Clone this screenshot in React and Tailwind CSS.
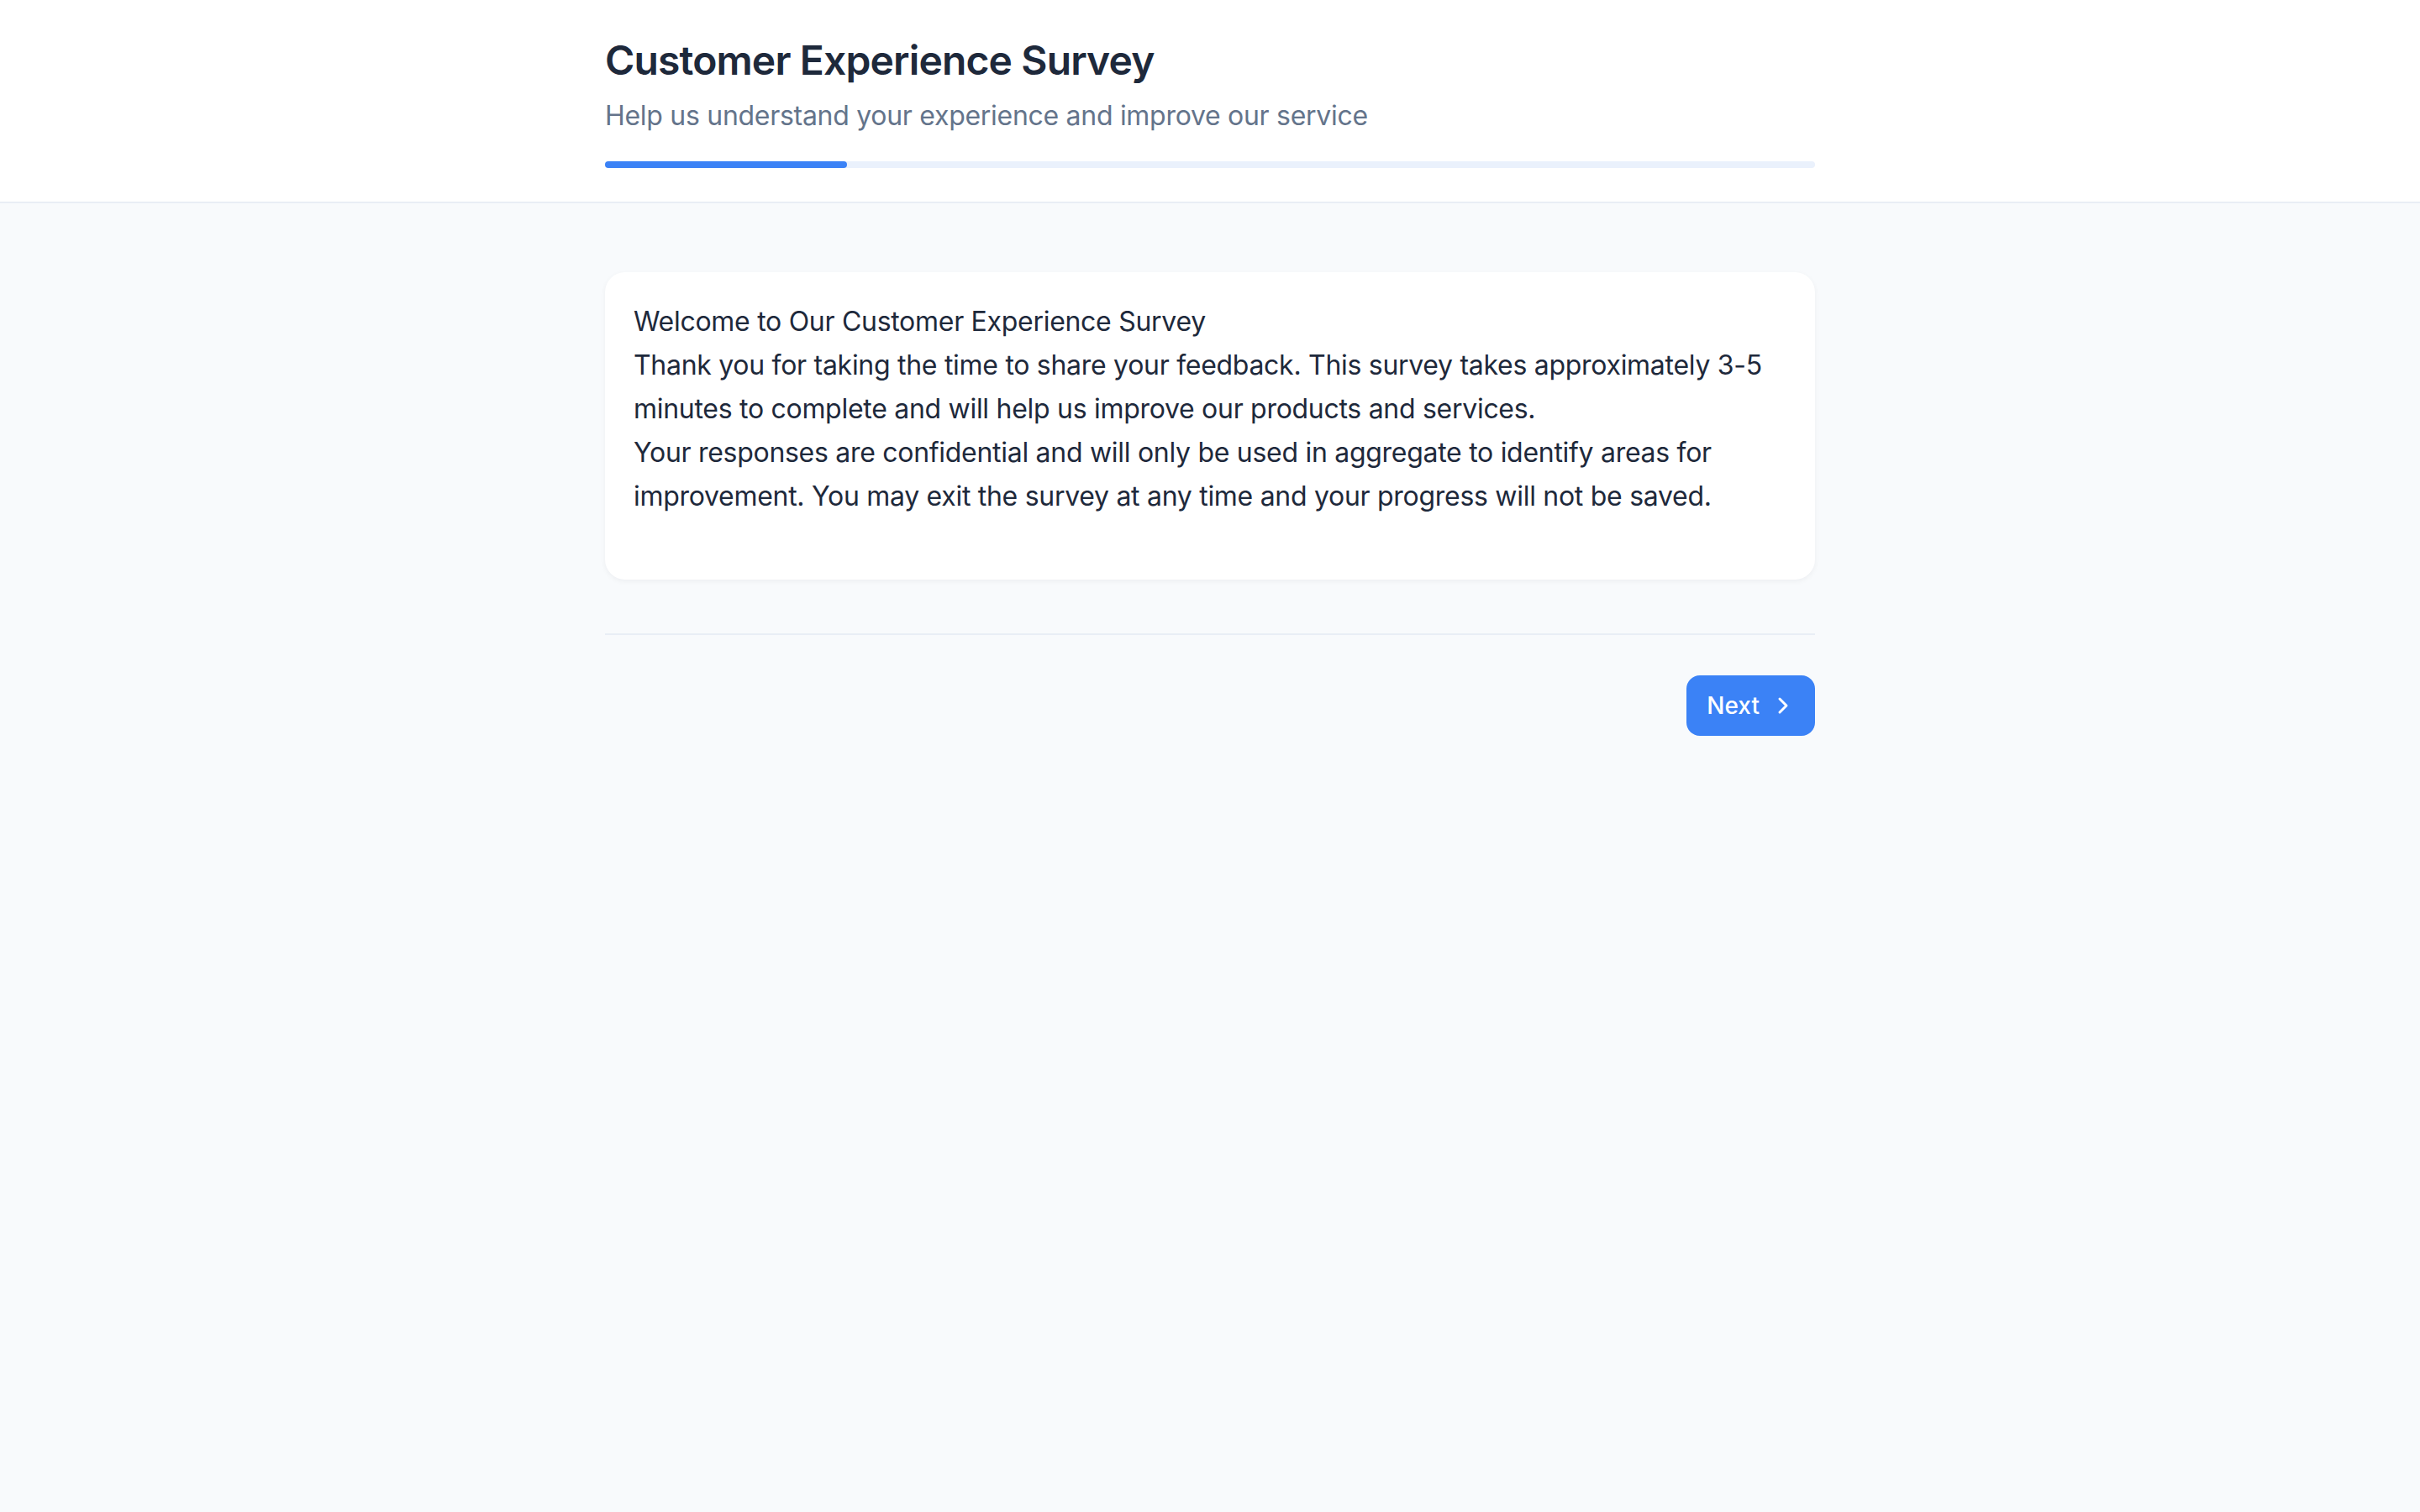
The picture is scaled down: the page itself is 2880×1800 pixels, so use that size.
import { ChevronRight } from "lucide-react"

export default function App() {
  return (
    <div className="min-h-screen bg-[#f8fafc] font-['Inter',sans-serif] text-[#1e293b]">
      <header className="bg-white border-b-2 border-[#e9eef5]">
        <div className="mx-auto w-[1440px] pt-[40px] pb-[40px]">
          <h1 className="text-[48px] leading-[64px] font-semibold tracking-[-0.018em] text-[#1e293b]">
            Customer Experience Survey
          </h1>
          <p className="mt-[10px] text-[32px] leading-[48px] tracking-[-0.009em] text-[#64748b]">
            Help us understand your experience and improve our service
          </p>
          <div className="mt-[30px] h-2 w-full rounded-full bg-[#eaf1fc]">
            <div className="h-2 w-1/5 rounded-full bg-[#3b82f6]" />
          </div>
        </div>
      </header>

      <main className="mx-auto w-[1440px] pt-[82px]">
        <div className="rounded-[24px] bg-white px-[34px] pt-[33px] pb-[73px] shadow-[0_2px_6px_rgba(15,23,42,0.05)] text-[32px] leading-[52px] tracking-[-0.009em]">
          <p>Welcome to Our Customer Experience Survey</p>
          <p>
            Thank you for taking the time to share your feedback. This survey takes approximately 3-5 minutes to
            complete and will help us improve our products and services.
          </p>
          <p>
            Your responses are confidential and will only be used in aggregate to identify areas for improvement.
            You may exit the survey at any time and your progress will not be saved.
          </p>
        </div>

        <div className="mt-[64px] border-t-2 border-[#e9eef5] pt-[48px] flex justify-end">
          <button className="flex h-[72px] items-center gap-3 rounded-[16px] bg-[#3b82f6] pl-6 pr-[22px] text-[28px] font-medium text-white">
            Next
            <ChevronRight className="h-8 w-8" strokeWidth={2.25} />
          </button>
        </div>
      </main>
    </div>
  )
}
